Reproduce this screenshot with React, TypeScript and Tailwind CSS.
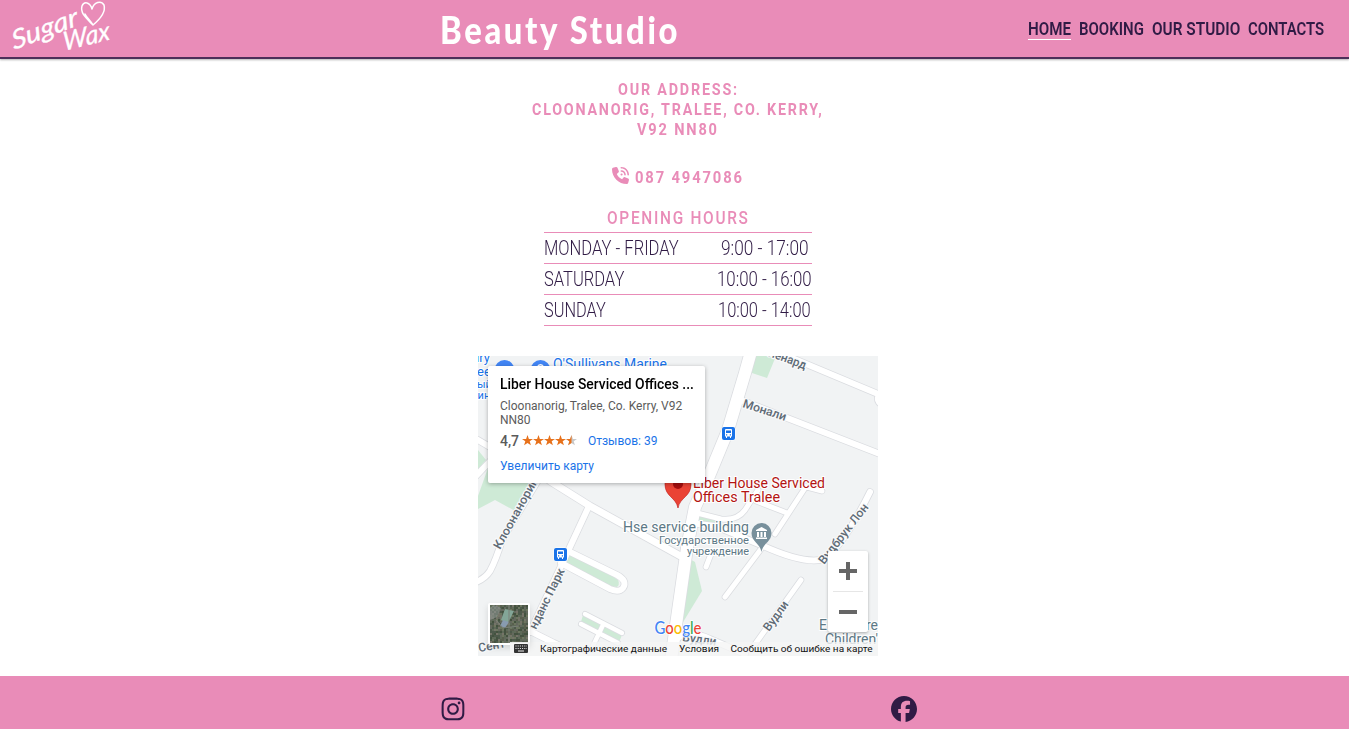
import { useLayoutEffect, useRef, useState } from "react";
import { FaFacebook, FaInstagram, FaPhoneVolume } from "react-icons/fa6";

type FitProps = { text: string; width: number; className?: string };

// Condenses one line of text horizontally to a given width.
function Fit({ text, width, className = "" }: FitProps) {
  const ref = useRef<HTMLSpanElement>(null);
  const [scale, setScale] = useState(1);
  useLayoutEffect(() => {
    if (ref.current) setScale(width / ref.current.offsetWidth);
  }, [text, width]);
  return (
    <span className={`block whitespace-nowrap ${className}`} style={{ width }}>
      <span ref={ref} className="inline-block origin-left" style={{ transform: `scaleX(${scale})` }}>
        {text}
      </span>
    </span>
  );
}

const nav = [
  { label: "HOME", width: 43, active: true },
  { label: "BOOKING", width: 65, active: false },
  { label: "OUR STUDIO", width: 88, active: false },
  { label: "CONTACTS", width: 76, active: false },
];

const hours = [
  { day: "MONDAY - FRIDAY", dayWidth: 135, time: "9:00 - 17:00", timeWidth: 88 },
  { day: "SATURDAY", dayWidth: 80, time: "10:00 - 16:00", timeWidth: 95 },
  { day: "SUNDAY", dayWidth: 62, time: "10:00 - 14:00", timeWidth: 93 },
];

function Logo() {
  return (
    <svg
      className="h-[57px] w-[120px]"
      viewBox="0 0 120 57"
      fill="white"
      stroke="white"
      strokeWidth="0.3"
      strokeLinejoin="round"
      fontFamily="Lato, sans-serif"
      fontStyle="italic"
      fontSize="26"
    >
      <text transform="translate(14 50) rotate(-21) skewX(-8)" textLength="70" lengthAdjust="spacingAndGlyphs">Sugar</text>
      <text transform="translate(64 51) rotate(-14) skewX(-8)" textLength="48" lengthAdjust="spacingAndGlyphs">Wax</text>
      <path d="M93 25C86 18 80 13 82 6C84 1 90 2 92 9C94 2 101 0 104 5C106 12 99 20 93 25C90 20 87 18 85 14" fill="none" strokeWidth="1.5" strokeLinecap="round" />
    </svg>
  );
}

const roads: { d: string; w: number }[] = [
  { d: "M768 348L878 394", w: 6 },
  { d: "M738 399L880 454", w: 6 },
  { d: "M478 440L495 450M474 478L495 456", w: 6 },
  { d: "M540 477L502 540Q496 560 490 571Q485 579 474 583", w: 6 },
  { d: "M550 481L590 506L684 558", w: 7 },
  { d: "M589 506L563 562L530 632M524 628L554 643L590 660", w: 6 },
  { d: "M568 551L617 575Q628 581 623 588Q619 593 610 589L561 563", w: 6 },
  { d: "M585 614L622 633M581 624L618 643M603 625L591 650", w: 4.5 },
  { d: "M697 513L721 519Q737 521 745 510Q752 499 758 490M756 501L787 513M805 488L775 534M803 486L822 491", w: 5 },
  { d: "M698 524L715 526L761 545Q800 563 820 560Q838 556 870 492", w: 6 },
  { d: "M761 549L725 597M711 554L706 567M801 580L753 647", w: 5 },
  { d: "M674 640Q690 629 710 639L745 654", w: 6 },
  { d: "M886 407Q875 403 878 396", w: 5 },
  { d: "M752 348L745 373L728 430L709 476L695 507L687 548L671 660", w: 12 },
];

const greens = [
  "M751 350L776 356L767 378L749 372Z",
  "M474 445L486 460L474 474Z",
  "M488 468L537 485L519 513L495 500L478 509V496Z",
  "M567 553L614 577Q622 582 617 587L609 586L561 560Z",
  "M583 615L622 635L619 642L580 625Z",
  "M688 558L695 562L702 591L677 632L683 580Z",
  "M698 513L717 516L715 526L697 522Z",
];

type Label = { t: string; x: number; y: number; w: number; r: number };
const streets: Label[] = [
  { t: "ленард", x: 768, y: 356, w: 39, r: 20 },
  { t: "Монали", x: 742, y: 407, w: 45, r: 18 },
  { t: "Клоонанориг", x: 500, y: 550, w: 78, r: -61 },
  { t: "нданс Парк", x: 536, y: 630, w: 66, r: -64 },
  { t: "Вудбрук Лон", x: 824, y: 565, w: 73, r: -52 },
  { t: "Вудли", x: 769, y: 632, w: 34, r: -54 },
  { t: "Вудли", x: 682, y: 641, w: 34, r: 8 },
  { t: "Сент", x: 479, y: 652, w: 27, r: -10 },
];

function Bus({ x, y }: { x: number; y: number }) {
  return (
    <g transform={`translate(${x} ${y})`}>
      <rect x="-.5" y="-.5" width="14" height="14" rx="2.5" fill="#fff" />
      <rect width="13" height="13" rx="2" fill="#1a73e8" />
      <path fill="#fff" fillRule="evenodd" d="M3 3Q3 2 4 2H9Q10 2 10 3V9.5H9V11H8V9.5H5V11H4V9.5H3ZM4 3.6V6H9V3.6ZM4 7.2V8.4H5.2V7.2ZM7.8 7.2V8.4H9V7.2Z" />
    </g>
  );
}

const aerial = ["#5e6a58", "#4d5a4b", "#6c765f", "#595f4e", "#757468", "#44523f", "#64695e"];
const cells = Array.from({ length: 361 }, (_, i) => {
  const h = Math.abs(Math.sin(i * 127.1 + 31.7) * 43758.5453);
  return { x: 490 + (i % 19) * 2, y: 605 + Math.floor(i / 19) * 2, c: aerial[Math.floor(h) % aerial.length] };
});

function MapDrawing() {
  return (
    <svg className="block h-[300px] w-[400px]" viewBox="478 356 400 300" fontFamily="Roboto, sans-serif">
      <rect x="478" y="356" width="400" height="300" fill="#f1f3f4" />
      {greens.map((d) => <path key={d} d={d} fill="#ceead6" />)}
      <g fill="none" strokeLinecap="round" strokeLinejoin="round">
        {roads.map((r) => <path key={r.d} d={r.d} stroke="#dadce0" strokeWidth={r.w + 1.5} />)}
        {roads.map((r) => <path key={r.d} d={r.d} stroke="#fff" strokeWidth={r.w} />)}
      </g>
      <g fill="#5f6b76" stroke="#f8f9fa" strokeWidth="2.5" paintOrder="stroke" strokeLinejoin="round">
        {streets.map((l, i) => (
          <text key={i} transform={`translate(${l.x} ${l.y}) rotate(${l.r})`} fontSize="12" fontWeight="500" textLength={l.w} lengthAdjust="spacingAndGlyphs">{l.t}</text>
        ))}
      </g>
      <g fill="#1a73e8" stroke="#fff" strokeWidth="2" paintOrder="stroke" fontSize="13">
        <text x="472" y="362">ury</text>
        <text x="477" y="376">ee</text>
        <text x="477" y="388" fontSize="11">ый</text>
        <text x="472" y="399" fontSize="11">зин</text>
        <text x="553" y="369" fontSize="14" textLength="114" lengthAdjust="spacingAndGlyphs">O'Sullivans Marine</text>
      </g>
      <circle cx="504.500" cy="370" r="10" fill="#4285f4" />
      <circle cx="540.500" cy="370" r="10" fill="#4285f4" />
      <path d="M538 366a3 3 0 0 1 5 0" stroke="#fff" strokeWidth="1.5" fill="none" />
      <Bus x={722} y={427} />
      <Bus x={554} y={548} />
      <path d="M678 508C676 497 665 497 665 484A13 13 0 0 1 691 484C691 497 680 497 678 508Z" fill="#ea4335" stroke="#c5221f" strokeWidth=".7" />
      <circle cx="678" cy="484" r="5" fill="#a50e0e" />
      <g fill="#b31412" stroke="#fff" strokeWidth="2" paintOrder="stroke" fontSize="14">
        <text x="693" y="488" textLength="132" lengthAdjust="spacingAndGlyphs">Liber House Serviced</text>
        <text x="693" y="502" textLength="87" lengthAdjust="spacingAndGlyphs">Offices Tralee</text>
      </g>
      <g fill="#5d7885" stroke="#fff" strokeWidth="2" paintOrder="stroke">
        <text x="623" y="532" fontSize="14" textLength="126" lengthAdjust="spacingAndGlyphs">Hse service building</text>
        <text x="659" y="544" fontSize="11" textLength="90" lengthAdjust="spacingAndGlyphs">Государственное</text>
        <text x="687" y="555" fontSize="11" textLength="62" lengthAdjust="spacingAndGlyphs">учреждение</text>
        <text x="819" y="630" fontSize="14">E</text>
        <text x="866" y="630" fontSize="14">re</text>
        <text x="825" y="644" fontSize="14" textLength="53" lengthAdjust="spacingAndGlyphs">Children'</text>
      </g>
      <path d="M761.500 552C760 543 751.500 542 751.500 533A10 10 0 0 1 771.500 533C771.500 542 763 543 761.500 552Z" fill="#78909c" />
      <path d="M756 531V530L761.500 527L767 530V531ZM757 532H759V537H757ZM760.500 532H762.500V537H760.500ZM764 532H766V537H764ZM756 537.500H767V539H756Z" fill="#fff" />
      <rect x="510" y="642" width="368" height="14" fill="#f5f5f5" fillOpacity=".8" />
      <rect x="488" y="603" width="42" height="42" rx="2" fill="#fff" className="drop-shadow-md" />
      <g>
        {cells.map((c, i) => <rect key={i} x={c.x} y={c.y} width="2" height="2" fill={c.c} />)}
        <path d="M490 608L494 605L501 608L497 617L490 620Z" fill="#8a928d" fillOpacity=".65" />
        <path d="M505 609L514 611L508 623L501 620Z" fill="#83a697" />
        <path d="M503 620L509 622L505 628L500 626Z" fill="#889bb0" />
        <path d="M496 620L503 628L519 626M509 605V643" stroke="#7b8178" strokeWidth="1" fill="none" />
      </g>
      <rect x="510" y="642" width="20" height="14" fill="#f5f5f5" fillOpacity=".9" />
      <rect x="514" y="644" width="14" height="9" rx="1" fill="#333" />
      <path d="M515.500 646H527M515.500 648.500H527" stroke="#eee" strokeWidth="1" strokeDasharray="1 1.200" />
      <path d="M518 651H524" stroke="#eee" />
      <text x="654.500" y="634" fontFamily="Lato, sans-serif" fontSize="17" fontWeight="500" textLength="47" lengthAdjust="spacingAndGlyphs" stroke="#fff" strokeWidth="1.500" paintOrder="stroke">
        <tspan fill="#4285f4">G</tspan><tspan fill="#ea4335">o</tspan><tspan fill="#fbbc04">o</tspan><tspan fill="#4285f4">g</tspan><tspan fill="#34a853">l</tspan><tspan fill="#ea4335">e</tspan>
      </text>
      <g fontSize="9.5" fill="#111">
        <text x="540" y="652" textLength="127" lengthAdjust="spacingAndGlyphs">Картографические данные</text>
        <text x="679" y="652" textLength="40" lengthAdjust="spacingAndGlyphs">Условия</text>
        <text x="730.500" y="652" textLength="142" lengthAdjust="spacingAndGlyphs">Сообщить об ошибке на карте</text>
      </g>
    </svg>
  );
}

function Stars() {
  const star = "M5.500 0L6.900 3.900H11L7.700 6.300L8.900 10.300L5.500 7.900L2.100 10.300L3.300 6.300L0 3.900H4.100Z";
  return (
    <svg className="mb-[2px] ml-[3px] h-[11px] w-[56px]" viewBox="0 0 56 11">
      {[0, 1, 2, 3, 4].map((n) => (
        <path key={n} d={star} transform={`translate(${n * 11} 0)`} fill={n < 4 ? "#e7711b" : "#c8c8c8"} />
      ))}
      <path d="M49.500 0V7.900L46.100 10.300L47.300 6.300L44 3.900H48.100Z" fill="#e7711b" />
    </svg>
  );
}

export default function App() {
  return (
    <div className="flex h-[729px] flex-col overflow-hidden bg-white font-[Roboto,sans-serif]">
      <header className="relative flex h-[59px] shrink-0 items-start border-b-2 border-[#4d2f59] bg-[#e98cb8] shadow-[0_1px_2px_rgba(0,0,0,0.3)]">
        <div className="w-[440px]"><Logo /></div>
        <h1 className="pt-[6px] text-[37px] leading-[48px] tracking-[3px] text-white">
          <Fit text="Beauty Studio" width={240} className="font-[Lato,sans-serif] font-black" />
        </h1>
        <nav className="mt-[18px] ml-auto mr-[25px] flex gap-2 text-[18px] leading-[21px] font-semibold text-[#301b45]">
          {nav.map((n) => (
            <a key={n.label} href="#" className={n.active ? "border-b border-white" : "border-b border-transparent"}>
              <Fit text={n.label} width={n.width} />
            </a>
          ))}
        </nav>
      </header>

      <main className="flex grow flex-col items-center pl-[7px]">
        <address className="mt-[21px] flex flex-col items-center text-[16px] leading-[20px] font-bold tracking-[2px] text-[#e98cb8] not-italic">
          <Fit text="OUR ADDRESS:" width={121} />
          <Fit text="CLOONANORIG, TRALEE, CO. KERRY," width={292} />
          <Fit text="V92 NN80" width={82} />
        </address>
        <div className="mt-[26px] flex h-[24px] items-center gap-[6px] text-[#e98cb8]">
          <FaPhoneVolume className="mb-[5px] size-[17px]" />
          <Fit text="087 4947086" width={109} className="text-[16px] leading-[20px] font-bold tracking-[2px]" />
        </div>
        <table className="mt-[13px] w-[268px] border-collapse text-[20px] leading-[30px] font-light text-[#301b45]">
          <caption className="text-[18px] leading-[29px] font-medium tracking-[2px] text-[#e98cb8]">
            <Fit text="OPENING HOURS" width={143} className="mx-auto" />
          </caption>
          <tbody>
            {hours.map((h) => (
              <tr key={h.day} className="h-[31px] border-y border-[#e98cb8]">
                <td className="p-0"><Fit text={h.day} width={h.dayWidth} /></td>
                <td className="w-[95px] p-0"><Fit text={h.time} width={h.timeWidth} className="mx-auto" /></td>
              </tr>
            ))}
          </tbody>
        </table>
        <section className="relative mt-[30px] h-[300px] w-[400px] overflow-hidden">
          <MapDrawing />
          <div className="absolute top-[10px] left-[10px] h-[117px] w-[217px] rounded-[2px] bg-white px-3 pt-[9px] text-[12px] leading-[14px] text-[#5b5b5b] shadow-[0_1px_4px_rgba(0,0,0,0.3)]">
            <Fit text="Liber House Serviced Offices ..." width={194} className="text-[14px] leading-[18px] font-medium text-black" />
            <p className="mt-[6px]">
              <Fit text="Cloonanorig, Tralee, Co. Kerry, V92" width={182} />
              <Fit text="NN80" width={31} />
            </p>
            <div className="mt-[7px] flex h-[14px] items-center">
              <Fit text="4,7" width={19} className="text-[14px] font-medium" />
              <Stars />
              <a href="#" className="ml-[10px] text-[#1a73e8]"><Fit text="Отзывов: 39" width={69} /></a>
            </div>
            <a href="#" className="mt-[11px] block text-[#1a73e8]"><Fit text="Увеличить карту" width={94} /></a>
          </div>
          <div className="absolute top-[195px] left-[350px] flex h-[81px] w-[40px] flex-col items-center rounded-[2px] bg-white shadow-[0_1px_3px_rgba(0,0,0,0.3)]">
            <svg className="h-[81px] w-[40px]" viewBox="0 0 40 81">
              <path d="M11 20H29M20 11V29M11 61H29" stroke="#666" strokeWidth="4" />
              <path d="M5 40.500H35" stroke="#e6e6e6" />
            </svg>
          </div>
        </section>
      </main>

      <footer className="flex h-[53px] shrink-0 bg-[#e98cb8] pt-[20px] text-[#301b45]">
        <FaInstagram className="ml-[440px] size-[26px]" />
        <FaFacebook className="ml-[425px] size-[26px]" />
      </footer>
    </div>
  );
}
